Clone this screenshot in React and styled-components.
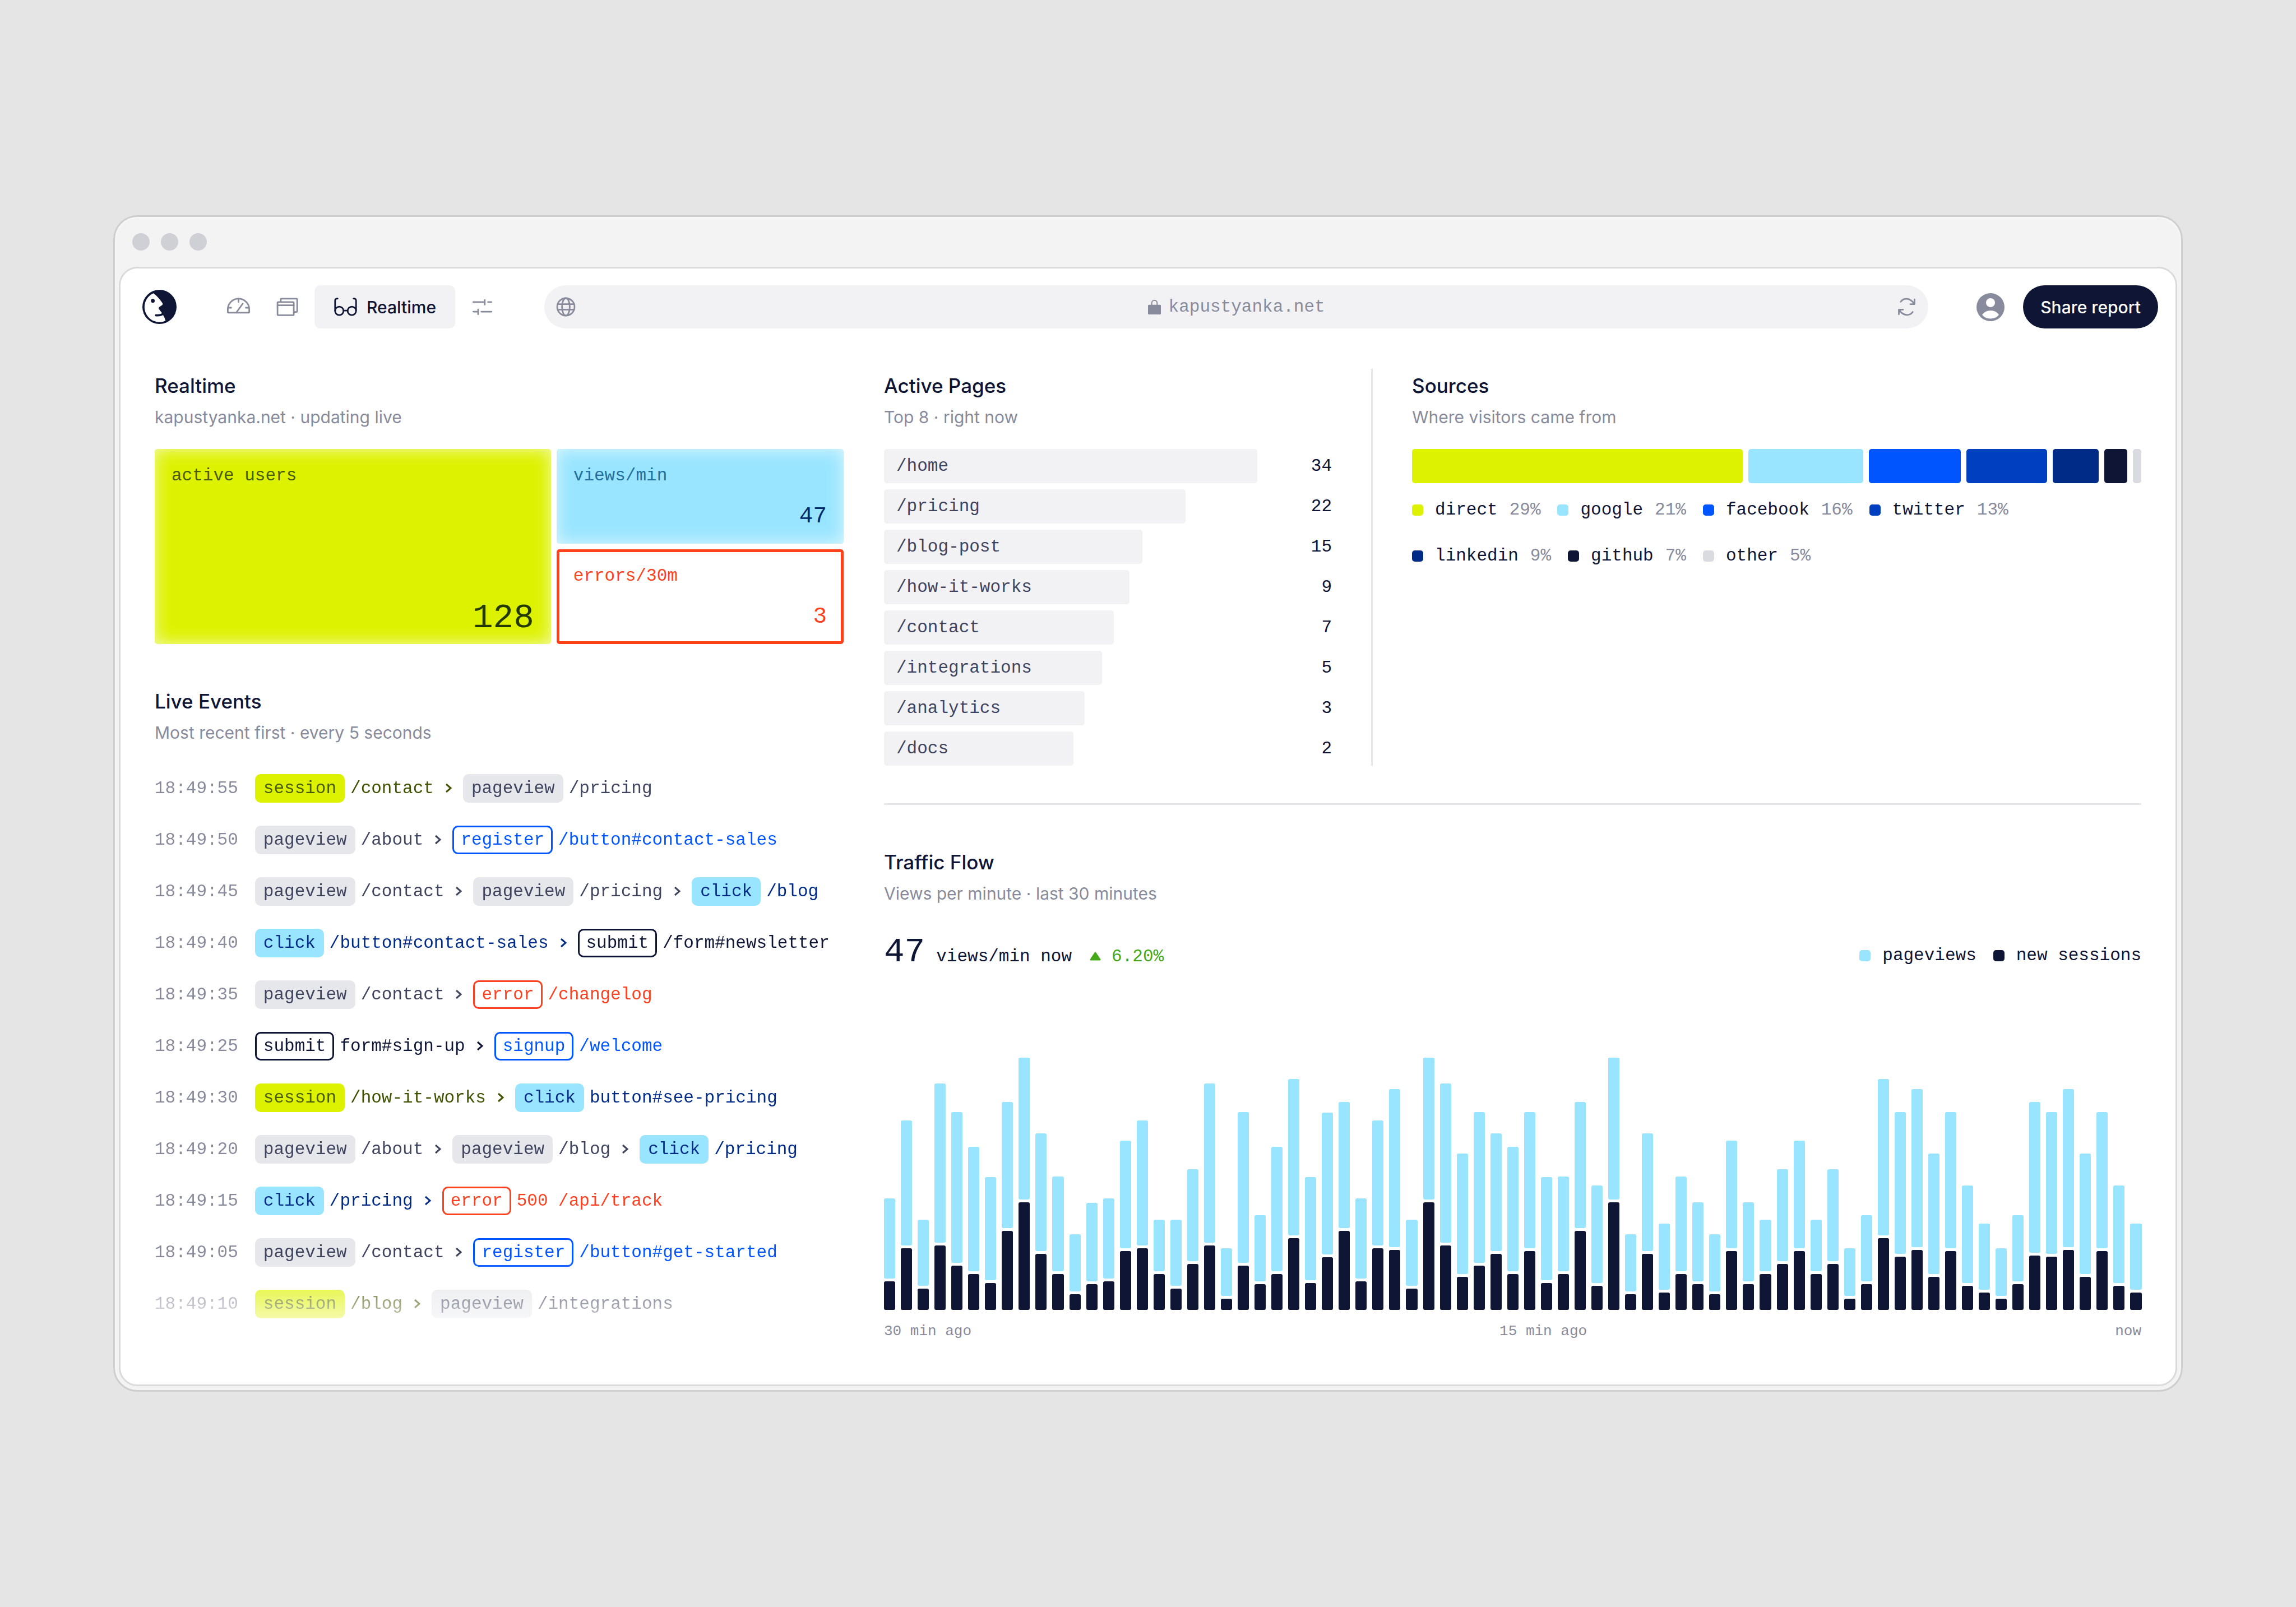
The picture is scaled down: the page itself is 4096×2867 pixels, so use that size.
import React from "react";
import styled, { createGlobalStyle, css } from "styled-components";

const SANS = `Inter, "Liberation Sans", sans-serif`;
const MONO = `"Liberation Mono", "DejaVu Sans Mono", monospace`;

const GlobalStyle = createGlobalStyle`
  * {
    box-sizing: border-box;
  }

  body {
    margin: 0;
    background: #e5e5e5;
    color: #0f1535;
    font-family: ${SANS};
    font-size: 30px;
  }

  h2, p, ul, ol, dl, dd {
    margin: 0;
    padding: 0;
  }

  ul, ol {
    list-style: none;
  }
`;

const Page = styled.div`
  min-height: 100vh;
  display: flex;
  flex-direction: column;
  justify-content: center;
  padding: 0 202px;
`;

const BrowserWindow = styled.div`
  padding: 0 7px 7px;
  background: #f3f3f3;
  border: 3px solid #cecece;
  border-radius: 43px;
  box-shadow: inset 0 2px 4px #fafafa;
`;

const TitleBar = styled.div`
  display: flex;
  align-items: center;
  gap: 20px;
  height: 89px;
  padding-left: 24px;
`;

const WindowDot = styled.span`
  width: 31px;
  height: 31px;
  border-radius: 50%;
  background: #cfd0d6;
`;

const AppFrame = styled.div`
  padding: 30px 31px 80px;
  background: #fff;
  border: 3px solid #dadada;
  border-radius: 33px;
`;

/* ---------- toolbar ---------- */

const Toolbar = styled.header`
  display: flex;
  align-items: center;
`;

const LogoLink = styled.a`
  display: flex;
  align-items: center;
  justify-content: center;
  width: 77px;
  height: 77px;
  margin-right: 64px;
`;

const Nav = styled.nav`
  display: flex;
  gap: 10px;
`;

const NavLink = styled.a`
  display: flex;
  align-items: center;
  justify-content: center;
  gap: 16px;
  min-width: 77px;
  height: 77px;
  padding: 0 ${(props) => (props.$active ? 34 : 0)}px;
  border-radius: 10px;
  background: ${(props) => (props.$active ? "#f2f2f5" : "transparent")};
  color: ${(props) => (props.$active ? "#0f1535" : "#888b9b")};
  font-weight: 500;
  text-decoration: none;
`;

const AddressBar = styled.div`
  flex: 1;
  display: flex;
  align-items: center;
  height: 77px;
  margin: 0 72px;
  padding: 0 17px;
  border-radius: 39px;
  background: #f2f2f5;
  color: #888b9b;
`;

const AddressLabel = styled.label`
  flex: 1;
  display: flex;
  align-items: center;
  justify-content: center;
  gap: 14px;
`;

const AddressInput = styled.input`
  width: 15ch;
  padding: 0;
  border: 0;
  background: none;
  color: inherit;
  font-family: ${MONO};
  font-size: 31px;
`;

const IconButton = styled.button`
  display: flex;
  align-items: center;
  justify-content: center;
  min-width: ${(props) => props.$size}px;
  height: ${(props) => props.$size}px;
  padding: 0;
  border: 0;
  background: none;
  color: #888b9b;
  cursor: pointer;
`;

const ShareButton = styled.button`
  height: 77px;
  margin-left: 20px;
  padding: 0 31px;
  border: 0;
  border-radius: 39px;
  background: #0f1535;
  color: #fff;
  font-family: inherit;
  font-size: 30px;
  font-weight: 500;
  cursor: pointer;
`;

const Icon = styled.svg.attrs({ viewBox: "0 0 200 200", "aria-hidden": true })`
  flex: none;
  width: 43px;
  height: 43px;
  fill: none;
  stroke: currentColor;
  stroke-width: 13;
  stroke-linecap: round;
  stroke-linejoin: round;
`;

/* ---------- layout ---------- */

const Dashboard = styled.main`
  display: grid;
  grid-template-columns: minmax(0, 40fr) minmax(0, 73fr);
  gap: 72px;
  padding: 72px 30px 0;
`;

const Column = styled.div`
  display: flex;
  flex-direction: column;
  gap: 72px;
`;

const TopPanels = styled.div`
  display: grid;
  grid-template-columns: minmax(0, 78fr) auto minmax(0, 127fr);
  gap: 70px;
  padding-bottom: 67px;
  border-bottom: 3px solid #e5e6ea;
`;

const Divider = styled.div`
  width: 3px;
  background: #e5e6ea;
`;

const PanelTitle = styled.h2`
  margin-bottom: 2px;
  font-size: 35px;
  font-weight: 500;
  line-height: 60px;
`;

const PanelNote = styled.p`
  color: #888b9b;
  font-size: 30px;
  line-height: 48px;
`;

/* ---------- realtime tiles ---------- */

const Tiles = styled.dl`
  display: grid;
  grid-template-columns: minmax(0, 69fr) minmax(0, 50fr);
  grid-template-rows: 169px 169px;
  gap: 10px;
  margin-top: 33px;
  font-family: ${MONO};
`;

const tileKinds = {
  users: css`
    grid-row: span 2;
    background: #ddf200;
    color: #233900;
    box-shadow: inset 0 0 30px rgba(255, 255, 255, 0.7);
  `,
  views: css`
    background: #99e5ff;
    color: #00296b;
    box-shadow: inset 0 0 30px rgba(255, 255, 255, 0.7);
  `,
  errors: css`
    color: #fb4120;
    box-shadow: inset 0 0 0 5px #ff4019;
  `,
};

const Tile = styled.div`
  display: flex;
  flex-direction: column;
  justify-content: space-between;
  padding: 30px 30px 22px;
  border-radius: 5px;
  ${(props) => tileKinds[props.$kind]}
`;

const TileLabel = styled.dt`
  color: ${(props) => props.$color};
  font-size: 31px;
  line-height: 36px;
`;

const TileValue = styled.dd`
  text-align: right;
  font-size: ${(props) => (props.$big ? 61 : 41)}px;
  line-height: ${(props) => (props.$big ? 48 : 54)}px;
`;

/* ---------- live events ---------- */

const EventList = styled.ol`
  margin-top: 29px;
  font-family: ${MONO};
  font-size: 31px;
  mask-image: linear-gradient(
    to bottom,
    #000 calc(100% - 126px),
    transparent calc(100% + 34px)
  );
`;

const EventRow = styled.li`
  display: flex;
  align-items: center;
  gap: 10px;
  height: 92px;
  white-space: nowrap;
`;

const EventTime = styled.time`
  margin-right: 20px;
  color: #888b9b;
`;

const eventColors = {
  session: { fill: "#ddf200", pill: "#4a5d00", text: "#3f5200" },
  pageview: { fill: "#e6e7eb", pill: "#3f445f", text: "#3f445f" },
  click: { fill: "#99e5ff", pill: "#002c88", text: "#002c88" },
  register: { line: "#0055ff", pill: "#0055ff", text: "#0055ff" },
  signup: { line: "#0055ff", pill: "#0055ff", text: "#0055ff" },
  submit: { line: "#0f1535", pill: "#0f1535", text: "#0f1535" },
  error: { line: "#fb4120", pill: "#fb4120", text: "#fb4120" },
};

const Pill = styled.span`
  padding: 0 12px;
  border: 3px solid ${(props) => eventColors[props.$type].line || "transparent"};
  border-radius: 10px;
  background: ${(props) => eventColors[props.$type].fill || "#fff"};
  color: ${(props) => eventColors[props.$type].pill};
  line-height: 45px;
`;

const EventTarget = styled.span`
  color: ${(props) => eventColors[props.$type].text};
`;

const Chevron = styled.svg`
  flex: none;
  width: 32px;
  height: 32px;
  fill: none;
  stroke: ${(props) => eventColors[props.$type].text};
  stroke-width: 3;
`;

/* ---------- active pages ---------- */

const PageList = styled.ol`
  display: flex;
  flex-direction: column;
  gap: 11px;
  margin-top: 33px;
  font-family: ${MONO};
  font-size: 31px;
  line-height: 61px;
`;

const PageRow = styled.li`
  display: flex;
`;

const PageTrack = styled.div`
  flex: 1;
`;

const PageBar = styled.div`
  padding-left: 22px;
  border-radius: 5px;
  background: #f2f2f5;
  color: #3f445f;
  white-space: nowrap;
`;

const PageCount = styled.span`
  width: 133px;
  text-align: right;
`;

/* ---------- sources ---------- */

const SourceBar = styled.div`
  display: flex;
  gap: 10px;
  height: 61px;
  margin-top: 33px;
`;

const SourceSegment = styled.div`
  flex: ${(props) => props.$share} 1 0;
  border-radius: 5px;
  background: ${(props) => props.$color};
`;

const Legend = styled.ul`
  display: flex;
  flex-wrap: wrap;
  gap: 42px 30px;
  font-family: ${MONO};
  font-size: 31px;
  line-height: 40px;
`;

const SourceLegend = styled(Legend)`
  margin-top: 28px;
`;

const LegendItem = styled.li`
  display: flex;
  align-items: center;
  gap: 21px;

  &::before {
    content: "";
    width: 20px;
    height: 20px;
    border-radius: 5px;
    background: ${(props) => props.$color};
  }
`;

const LegendShare = styled.span`
  color: #888b9b;
`;

/* ---------- traffic ---------- */

const Metrics = styled.div`
  display: flex;
  align-items: baseline;
  gap: 20px;
  margin-top: 50px;
  font-family: ${MONO};
  font-size: 31px;
  line-height: 36px;
`;

const MetricValue = styled.strong`
  font-size: 61px;
  font-weight: 400;
  line-height: 61px;
`;

const Trend = styled.span`
  display: flex;
  align-items: center;
  gap: 18px;
  margin-left: 11px;
  margin-right: auto;
  color: #45a818;
`;

const Chart = styled.div`
  display: flex;
  align-items: flex-end;
  gap: 10px;
  height: 580px;
  margin-top: 28px;
`;

const ChartColumn = styled.div`
  flex: 1;
  display: flex;
  flex-direction: column;
  gap: 5px;
`;

const ChartBar = styled.div`
  border-radius: 3px;
  background: ${(props) => props.$color};
`;

const Axis = styled.div`
  display: flex;
  justify-content: space-between;
  margin-top: 23px;
  color: #888b9b;
  font-family: ${MONO};
  font-size: 26px;
  line-height: 30px;
`;

/* ---------- data ---------- */

const events = [
  ["18:49:55", ["session", "/contact"], ["pageview", "/pricing"]],
  ["18:49:50", ["pageview", "/about"], ["register", "/button#contact-sales"]],
  ["18:49:45", ["pageview", "/contact"], ["pageview", "/pricing"], ["click", "/blog"]],
  ["18:49:40", ["click", "/button#contact-sales"], ["submit", "/form#newsletter"]],
  ["18:49:35", ["pageview", "/contact"], ["error", "/changelog"]],
  ["18:49:25", ["submit", "form#sign-up"], ["signup", "/welcome"]],
  ["18:49:30", ["session", "/how-it-works"], ["click", "button#see-pricing"]],
  ["18:49:20", ["pageview", "/about"], ["pageview", "/blog"], ["click", "/pricing"]],
  ["18:49:15", ["click", "/pricing"], ["error", "500 /api/track"]],
  ["18:49:05", ["pageview", "/contact"], ["register", "/button#get-started"]],
  ["18:49:10", ["session", "/blog"], ["pageview", "/integrations"]],
];

const pages = [
  { path: "/home", count: 34, width: 100 },
  { path: "/pricing", count: 22, width: 80.8 },
  { path: "/blog-post", count: 15, width: 69.2 },
  { path: "/how-it-works", count: 9, width: 65.8 },
  { path: "/contact", count: 7, width: 61.5 },
  { path: "/integrations", count: 5, width: 58.4 },
  { path: "/analytics", count: 3, width: 53.8 },
  { path: "/docs", count: 2, width: 50.8 },
];

const sources = [
  { name: "direct", percent: 29, share: 115, color: "#ddf200" },
  { name: "google", percent: 21, share: 40, color: "#99e5ff" },
  { name: "facebook", percent: 16, share: 32, color: "#0055ff" },
  { name: "twitter", percent: 13, share: 28, color: "#0040c0" },
  { name: "linkedin", percent: 9, share: 16, color: "#002c88" },
  { name: "github", percent: 7, share: 8, color: "#0f1535" },
  { name: "other", percent: 5, share: 3, color: "#dadbe1" },
];

// [pageviews, new sessions]
const traffic = [
  [143, 51], [223, 110], [118, 38], [284, 115], [269, 79],
  [222, 64], [184, 48], [225, 141], [253, 192], [210, 100],
  [169, 64], [102, 28], [140, 46], [143, 51], [192, 105],
  [223, 110], [92, 64], [118, 38], [164, 82], [284, 115],
  [85, 20], [269, 79], [118, 46], [222, 64], [279, 128],
  [184, 48], [253, 94], [225, 141], [143, 51], [223, 110],
  [282, 107], [118, 38], [253, 192], [284, 115], [215, 59],
  [269, 79], [210, 100], [222, 64], [243, 105], [184, 48],
  [169, 64], [225, 141], [174, 43], [253, 192], [102, 28],
  [210, 100], [118, 31], [169, 64], [141, 46], [102, 28],
  [192, 105], [141, 46], [92, 64], [164, 82], [192, 105],
  [92, 64], [164, 82], [85, 20], [118, 46], [279, 128],
  [253, 95], [282, 107], [215, 59], [243, 105], [174, 43],
  [118, 31], [85, 20], [118, 46], [269, 97], [253, 95],
  [282, 107], [215, 59], [243, 105], [174, 43], [118, 31],
];

/* ---------- icons ---------- */

const Logo = () => (
  <svg width="61" height="61" viewBox="0 0 288 288" aria-hidden="true">
    <circle cx="144" cy="144" r="144" fill="#0f1535" />
    <path
      fill="#fff"
      d="M93 29C125 52 154 88 170 114Q173 121 168 127L141 146Q133 154 140 163L164 195L174 212C184 228 191 244 195 261A126 126 0 0 1 18 144A126 126 0 0 1 93 29Z"
    />
    <circle cx="88" cy="93" r="16" fill="#0f1535" />
    <path
      d="M115 215Q150 219 174 203"
      fill="none"
      stroke="#0f1535"
      strokeWidth="18"
      strokeLinecap="round"
    />
  </svg>
);

const GaugeIcon = () => (
  <Icon>
    <path d="M17 148H183Q189 148 189 142V120A89 88 0 0 0 11 120V142Q11 148 17 148Z" />
    <path d="M100 32V60M15 107H39M161 107H185M84 144L135 73" />
  </Icon>
);

const PagesIcon = () => (
  <Icon>
    <path d="M46 55V37Q46 32 51 32H176Q182 32 182 38V136Q182 142 176 142H160" />
    <rect x="19" y="60" width="135" height="109" rx="6" />
    <path d="M19 87H154" />
  </Icon>
);

const GlassesIcon = () => (
  <Icon>
    <circle cx="48" cy="133" r="35" />
    <circle cx="152" cy="133" r="35" />
    <path d="M83 131H117M13 133V48Q13 31 34 31M187 133V48Q187 31 166 31" />
  </Icon>
);

const SlidersIcon = () => (
  <Icon>
    <path d="M25 60H120M120 42V81M147 60H175M25 140H65M65 122V162M92 140H175" />
  </Icon>
);

const GlobeIcon = () => (
  <Icon>
    <circle cx="100" cy="100" r="72" />
    <ellipse cx="100" cy="100" rx="32" ry="72" />
    <path d="M33 77H167M33 123H167" />
  </Icon>
);

const RefreshIcon = () => (
  <Icon>
    <path d="M50 58C62 41 80 33 97 33C127 33 147 51 164 76M165 38V77H130" />
    <path d="M150 142C138 159 120 167 103 167C73 167 53 149 36 124M35 162V123H70" />
  </Icon>
);

const LockIcon = () => (
  <svg width="23" height="26" viewBox="0 0 106 120" aria-hidden="true">
    <rect y="40" width="106" height="80" rx="7" fill="currentColor" />
    <path
      d="M31 44V26A22 22 0 0 1 75 26V44"
      fill="none"
      stroke="currentColor"
      strokeWidth="9"
    />
  </svg>
);

const AvatarIcon = () => (
  <svg width="50" height="50" viewBox="0 0 100 100" aria-hidden="true">
    <circle cx="50" cy="50" r="50" fill="currentColor" />
    <circle cx="50" cy="34" r="16" fill="#fff" />
    <path
      d="M20 77Q31 62 50 62Q69 62 80 77Q69 91 50 91Q31 91 20 77Z"
      fill="#fff"
    />
  </svg>
);

/* ---------- components ---------- */

const PanelHeading = ({ title, note }) => (
  <div>
    <PanelTitle>{title}</PanelTitle>
    <PanelNote>{note}</PanelNote>
  </div>
);

const LiveEvent = ({ time, steps }) => (
  <EventRow>
    <EventTime>{time}</EventTime>
    {steps.map(([type, target], index) => (
      <React.Fragment key={index}>
        {index > 0 && (
          <Chevron viewBox="0 0 32 32" $type={steps[index - 1][0]}>
            <path d="M12 9L20 16L12 23" />
          </Chevron>
        )}
        <Pill $type={type}>{type}</Pill>
        <EventTarget $type={type}>{target}</EventTarget>
      </React.Fragment>
    ))}
  </EventRow>
);

const App = () => {
  return (
    <Page>
      <GlobalStyle />
      <BrowserWindow>
        <TitleBar>
          <WindowDot />
          <WindowDot />
          <WindowDot />
        </TitleBar>
        <AppFrame>
          <Toolbar>
            <LogoLink href="#home" aria-label="Home">
              <Logo />
            </LogoLink>
            <Nav>
              <NavLink href="#overview" aria-label="Overview">
                <GaugeIcon />
              </NavLink>
              <NavLink href="#pages" aria-label="Pages">
                <PagesIcon />
              </NavLink>
              <NavLink href="#realtime" $active>
                <GlassesIcon />
                Realtime
              </NavLink>
              <NavLink href="#settings" aria-label="Settings">
                <SlidersIcon />
              </NavLink>
            </Nav>
            <AddressBar>
              <GlobeIcon />
              <AddressLabel>
                <LockIcon />
                <AddressInput
                  type="text"
                  aria-label="Site address"
                  defaultValue="kapustyanka.net"
                />
              </AddressLabel>
              <IconButton $size={43} aria-label="Refresh">
                <RefreshIcon />
              </IconButton>
            </AddressBar>
            <IconButton $size={77} aria-label="Account">
              <AvatarIcon />
            </IconButton>
            <ShareButton>Share report</ShareButton>
          </Toolbar>

          <Dashboard>
            <Column>
              <section>
                <PanelHeading
                  title="Realtime"
                  note="kapustyanka.net · updating live"
                />
                <Tiles>
                  <Tile $kind="users">
                    <TileLabel $color="#4a5d0c">active users</TileLabel>
                    <TileValue $big>128</TileValue>
                  </Tile>
                  <Tile $kind="views">
                    <TileLabel $color="#226f9c">views/min</TileLabel>
                    <TileValue>47</TileValue>
                  </Tile>
                  <Tile $kind="errors">
                    <TileLabel $color="#fb4120">errors/30m</TileLabel>
                    <TileValue>3</TileValue>
                  </Tile>
                </Tiles>
              </section>

              <section>
                <PanelHeading
                  title="Live Events"
                  note="Most recent first · every 5 seconds"
                />
                <EventList>
                  {events.map(([time, ...steps]) => (
                    <LiveEvent key={time} time={time} steps={steps} />
                  ))}
                </EventList>
              </section>
            </Column>

            <Column>
              <TopPanels>
                <section>
                  <PanelHeading title="Active Pages" note="Top 8 · right now" />
                  <PageList>
                    {pages.map((page) => (
                      <PageRow key={page.path}>
                        <PageTrack>
                          <PageBar style={{ width: `${page.width}%` }}>
                            {page.path}
                          </PageBar>
                        </PageTrack>
                        <PageCount>{page.count}</PageCount>
                      </PageRow>
                    ))}
                  </PageList>
                </section>
                <Divider />
                <section>
                  <PanelHeading title="Sources" note="Where visitors came from" />
                  <SourceBar>
                    {sources.map((source) => (
                      <SourceSegment
                        key={source.name}
                        $share={source.share}
                        $color={source.color}
                      />
                    ))}
                  </SourceBar>
                  <SourceLegend>
                    {sources.map((source) => (
                      <LegendItem key={source.name} $color={source.color}>
                        {source.name}
                        <LegendShare>{source.percent}%</LegendShare>
                      </LegendItem>
                    ))}
                  </SourceLegend>
                </section>
              </TopPanels>

              <section>
                <PanelHeading
                  title="Traffic Flow"
                  note="Views per minute · last 30 minutes"
                />
                <Metrics>
                  <MetricValue>47</MetricValue>
                  <span>views/min now</span>
                  <Trend>
                    <svg width="22" height="17" viewBox="0 0 22 17" aria-hidden="true">
                      <path
                        d="M11 2L19 14H3Z"
                        fill="currentColor"
                        stroke="currentColor"
                        strokeWidth="3"
                        strokeLinejoin="round"
                      />
                    </svg>
                    6.20%
                  </Trend>
                  <Legend>
                    <LegendItem $color="#99e5ff">pageviews</LegendItem>
                    <LegendItem $color="#0f1535">new sessions</LegendItem>
                  </Legend>
                </Metrics>
                <Chart>
                  {traffic.map(([views, sessions], index) => (
                    <ChartColumn key={index}>
                      <ChartBar $color="#99e5ff" style={{ height: views }} />
                      <ChartBar $color="#0f1535" style={{ height: sessions }} />
                    </ChartColumn>
                  ))}
                </Chart>
                <Axis>
                  <span>30 min ago</span>
                  <span>15 min ago</span>
                  <span>now</span>
                </Axis>
              </section>
            </Column>
          </Dashboard>
        </AppFrame>
      </BrowserWindow>
    </Page>
  );
};

export default App;
